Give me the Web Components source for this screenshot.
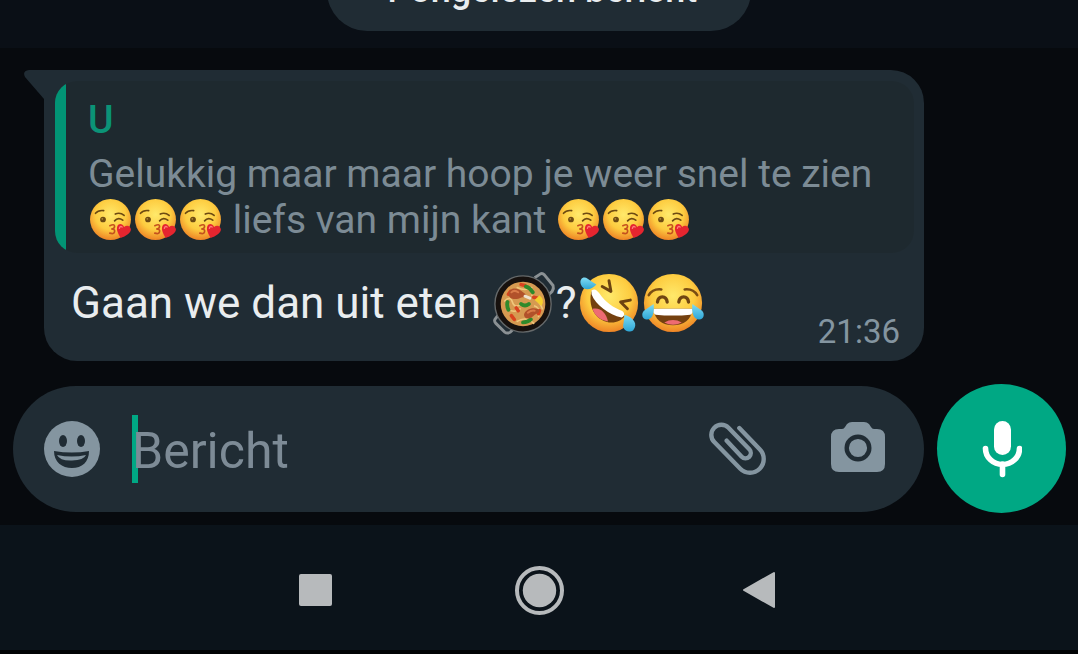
<!DOCTYPE html>
<html lang="nl">
<head>
<meta charset="utf-8">
<meta name="viewport" content="width=device-width, initial-scale=1">
<title>Chat</title>
<style>
  html {
    --bubble: #202c34;
    --muted: #8495a0;
    --accent: #00a884;
    background: #000;
  }
  body {
    margin: 0;
    font-family: Roboto, "Liberation Sans", sans-serif;
    color: #e9edef;
  }
</style>
</head>
<body>
<chat-screen>
  <unread-divider slot="top">1 ongelezen bericht</unread-divider>
  <chat-bubble time="21:36">
    <quoted-message slot="quote" author="U">Gelukkig maar maar hoop je weer snel te zien <chat-emoji name="kiss"></chat-emoji><chat-emoji name="kiss"></chat-emoji><chat-emoji name="kiss"></chat-emoji> liefs van mijn kant <chat-emoji name="kiss"></chat-emoji><chat-emoji name="kiss"></chat-emoji><chat-emoji name="kiss"></chat-emoji></quoted-message>
    Gaan we dan uit eten <chat-emoji name="pan"></chat-emoji>?<chat-emoji name="rofl"></chat-emoji><chat-emoji name="joy"></chat-emoji>
  </chat-bubble>
  <chat-composer placeholder="Bericht"></chat-composer>
  <system-nav slot="bottom"></system-nav>
</chat-screen>

<script>
const FACE = `
  <defs>
    <radialGradient id="face" cx="50%" cy="38%" r="62%">
      <stop offset="0" stop-color="#ffe96b"/>
      <stop offset=".6" stop-color="#fdcc40"/>
      <stop offset="1" stop-color="#ee8426"/>
    </radialGradient>
    <linearGradient id="tear" x1="0" y1="0" x2="0" y2="1">
      <stop offset="0" stop-color="#7fdcf5"/>
      <stop offset="1" stop-color="#2ea6d6"/>
    </linearGradient>
  </defs>
  <circle cx="32" cy="32" r="30" fill="url(#face)"/>`;

const EMOJI = {
  kiss: {
    label: 'gezicht dat een kus geeft',
    body: `${FACE}
      <g fill="none" stroke="#6d4a12" stroke-width="2.4" stroke-linecap="round">
        <path d="M10 23Q14 18 22 19"/>
        <path d="M39 24Q46 21 52 26"/>
        <path d="M38 34Q43 28 50 33"/>
      </g>
      <circle cx="21" cy="32" r="4.2" fill="#6d4a12"/>
      <circle cx="20" cy="31" r="1.3" fill="#b08a3a"/>
      <path d="M31 41Q38 38 38 42Q38 46 33 46Q39 46 38 50Q37 54 31 52" fill="none" stroke="#c4511e" stroke-width="2.4" stroke-linecap="round"/>
      <path d="M47 59C44 54 40 48 42 42C44 37 50 38 52 43C56 39 62 42 62 47C61 53 53 57 47 59Z" fill="#e5252f"/>
      <path d="M45 45Q46 41 49 43" fill="none" stroke="#ff7b78" stroke-width="2" stroke-linecap="round"/>`
  },
  pan: {
    label: 'pan met eten',
    body: `
      <g fill="none" stroke="#8b9194" stroke-width="3" stroke-linejoin="round">
        <path d="M43 6L49 2Q51 1 53 3L62 14Q63 17 61 20L58 23"/>
        <path d="M5 45L2 49Q1 51 3 53L12 62Q15 64 18 62L21 59"/>
      </g>
      <circle cx="31" cy="33" r="29" fill="#17110e" stroke="#65696a" stroke-width="1.4"/>
      <circle cx="31" cy="33" r="23" fill="#d69a51"/>
      <g fill="none" stroke="#f0c77c" stroke-width="1.6" stroke-linecap="round">
        <path d="M12 30Q18 24 20 31T30 33M25 16Q33 20 40 16M40 24Q48 30 51 38M15 38Q22 43 28 38M25 51Q34 45 42 53M43 35Q49 37 47 46"/>
      </g>
      <g fill="none" stroke="#d9431f" stroke-width="3.6" stroke-linecap="round">
        <path d="M29 13L33 14M19 45L22 49M24 37L26 40M46 27L42 26M48 40L47 43M16 23L18 20"/>
      </g>
      <g fill="none" stroke="#2f8a2b" stroke-width="4" stroke-linecap="round">
        <path d="M34 15Q38 16 41 21M15 31Q14 35 16 39M29 33Q33 36 37 33M31 52Q36 52 39 49"/>
      </g>
      <path d="M43 29L48 24Q54 29 50 35Z" fill="#f5cf2e"/>
      <g fill="#b1512a">
        <path d="M16 23C17 15 26 16 31 21C36 24 35 27 30 26C24 29 17 29 16 23Z"/>
        <path d="M32 44C33 39 40 36 46 38C50 40 47 43 43 44C39 49 32 49 32 44Z"/>
      </g>
      <path d="M33 25L38 27" stroke="#eee2cf" stroke-width="3" stroke-linecap="round"/>
      <path d="M19 21Q22 18 26 21M36 42Q40 39 43 40" fill="none" stroke="#d97b48" stroke-width="2" stroke-linecap="round"/>`
  },
  rofl: {
    label: 'rollend van het lachen',
    body: `${FACE}
      <g fill="none" stroke="#6b4310" stroke-width="3" stroke-linecap="round" stroke-linejoin="round">
        <path d="M25 15L34 20L32 9"/>
        <path d="M54 29L44 31L51 38"/>
      </g>
      <path d="M14 20C10 34 17 50 32 52C39 53 45 50 48 46Z" fill="#74400f"/>
      <path d="M15 38C23 36 29 42 31 51C23 50 17 45 15 38Z" fill="#ee6b72"/>
      <path d="M14 19C17 17 19 18 22 22C29 32 37 37 45 40C49 42 48 46 45 47C32 44 18 34 14 23Z" fill="#fff"/>
      <path d="M19 13C13 20 5 19 3 13C1 7 6 4 10 7C13 9 16 11 19 13Z" fill="url(#tear)"/>
      <path d="M48 44C58 47 62 54 57 60C51 64 45 59 47 53Z" fill="url(#tear)"/>`
  },
  joy: {
    label: 'tranen van het lachen',
    body: `${FACE}
      <g fill="none" stroke="#7a4d13" stroke-width="2.6" stroke-linecap="round">
        <path d="M7 24Q11 17 20 18"/>
        <path d="M57 24Q53 17 44 18"/>
      </g>
      <g fill="none" stroke="#704512" stroke-width="3.4" stroke-linecap="round">
        <path d="M16 31C17 24 25 24 26 31"/>
        <path d="M38 31C39 24 47 24 48 31"/>
      </g>
      <path d="M12 38H52C51 50 43 55 32 55S13 50 12 38Z" fill="#74400f"/>
      <path d="M12 38H52Q53 43 50 44Q32 46 14 44Q11 43 12 38Z" fill="#fff"/>
      <path d="M23 52Q32 47 41 52Q32 57 23 52Z" fill="#ee6b72"/>
      <path d="M12 33C13 42 11 49 5 49C0 49-1 43 2 40Z" fill="url(#tear)"/>
      <path d="M52 33C51 42 53 49 59 49C64 49 65 43 62 40Z" fill="url(#tear)"/>`
  }
};

/**
 * @class ChatEmoji
 */
class ChatEmoji extends HTMLElement {
  constructor () {
    super();
    this.attachShadow({ mode: 'open' });
  }
  connectedCallback () {
    const emoji = EMOJI[this.getAttribute('name')];
    this.shadowRoot.innerHTML = `
      <style>
      :host {
        display: inline-block;
        width: var(--emoji-size, 45px);
        height: var(--emoji-size, 45px);
        vertical-align: top;
      }
      svg {
        display: block;
        width: 100%;
        height: 100%;
      }
      </style>
      <svg viewBox="-1 -1 66 66" role="img" aria-label="${emoji.label}">${emoji.body}</svg>`;
  }
}

/**
 * @class UnreadDivider
 */
class UnreadDivider extends HTMLElement {
  constructor () {
    super();
    this.attachShadow({ mode: 'open' }).innerHTML = `
      <style>
      :host {
        display: flex;
        flex: none;
        align-items: flex-end;
        justify-content: center;
        box-sizing: border-box;
        height: 48px;
        padding-bottom: 17px;
        overflow: hidden;
        background: #0a0f16;
      }
      .pill {
        flex: none;
        padding: 20px 54px;
        border-radius: 40px;
        background: var(--bubble);
        font-size: 36px;
        font-weight: 500;
        line-height: 42px;
      }
      </style>
      <div class="pill"><slot></slot></div>`;
  }
}

/**
 * @class QuotedMessage
 */
class QuotedMessage extends HTMLElement {
  constructor () {
    super();
    this.attachShadow({ mode: 'open' });
  }
  connectedCallback () {
    this.shadowRoot.innerHTML = `
      <style>
      :host {
        --emoji-size: 45px;
        display: block;
        padding: 16px 22px 10px 33px;
        border-radius: 22px;
        background: linear-gradient(90deg, #029475 11px, #1e292f 11px);
        font-size: 39px;
        line-height: 46px;
        color: #7c8b95;
      }
      .wrap {
        display: flex;
        flex-direction: column;
        gap: 8px;
      }
      .author {
        color: #0b9377;
        font-weight: 500;
      }
      </style>
      <div class="wrap">
        <div class="author">${this.getAttribute('author')}</div>
        <div><slot></slot></div>
      </div>`;
  }
}

/**
 * @class ChatBubble
 */
class ChatBubble extends HTMLElement {
  constructor () {
    super();
    this.attachShadow({ mode: 'open' });
  }
  connectedCallback () {
    const time = this.getAttribute('time');
    this.shadowRoot.innerHTML = `
      <style>
      :host {
        display: block;
        position: relative;
        margin: 0 154px 0 44px;
        padding: 11px 10px 9px 11px;
        border-radius: 0 33px 33px 33px;
        background: var(--bubble);
      }
      .tail {
        position: absolute;
        top: 0;
        left: -20px;
        width: 21px;
        height: 30px;
        fill: var(--bubble);
      }
      .row {
        display: flex;
        justify-content: space-between;
        align-items: flex-end;
        padding: 18px 14px 0 16px;
      }
      .text {
        --emoji-size: 64px;
        margin-bottom: 17px;
        font-size: 44px;
        line-height: 64px;
      }
      time {
        font-size: 33px;
        line-height: 40px;
        color: var(--muted);
      }
      </style>
      <svg class="tail" viewBox="0 0 21 30" aria-hidden="true"><path d="M21 0H5Q-2 1 1 7L20 29H21Z"/></svg>
      <slot name="quote"></slot>
      <div class="row">
        <div class="text"><slot></slot></div>
        <time datetime="${time}">${time}</time>
      </div>`;
  }
}

/**
 * @class ChatComposer
 */
class ChatComposer extends HTMLElement {
  constructor () {
    super();
    this.attachShadow({ mode: 'open' });
  }
  connectedCallback () {
    const placeholder = this.getAttribute('placeholder');
    this.shadowRoot.innerHTML = `
      <style>
      :host {
        display: flex;
        align-items: center;
        gap: 13px;
        padding: 0 12px 0 13px;
      }
      .field {
        display: flex;
        flex: 1;
        min-width: 0;
        align-items: center;
        box-sizing: border-box;
        height: 126px;
        padding: 0 38px 0 31px;
        border-radius: 63px;
        background: var(--bubble);
      }
      button {
        flex: none;
        display: flex;
        align-items: center;
        justify-content: center;
        padding: 0;
        border: none;
        background: none;
        color: var(--muted);
        cursor: pointer;
      }
      svg {
        display: block;
      }
      input {
        flex: 1;
        min-width: 0;
        box-sizing: border-box;
        height: 68px;
        margin: 0 32px;
        padding: 4px 0 0;
        border: none;
        outline: none;
        /* the caret bar sits under the placeholder */
        background: linear-gradient(var(--accent), var(--accent)) no-repeat left / 6px 100%;
        font: 50px/64px Roboto, "Liberation Sans", sans-serif;
        color: inherit;
        caret-color: var(--accent);
      }
      input::placeholder {
        color: #7d8b96;
        opacity: 1;
      }
      .camera {
        margin-left: 64px;
      }
      .mic {
        width: 129px;
        height: 129px;
        border-radius: 50%;
        background: var(--accent);
        color: #fff;
      }
      </style>
      <div class="field">
        <button type="button" aria-label="Emoji">
          <svg width="56" height="56" viewBox="0 0 56 56">
            <circle cx="28" cy="28" r="28" fill="currentColor"/>
            <g fill="#202c34">
              <ellipse cx="19" cy="20" rx="4" ry="6"/>
              <ellipse cx="37" cy="20" rx="4" ry="6"/>
              <path d="M10 30Q28 33 45 30C45 41 38 47 28 47S10 41 10 30Z"/>
            </g>
            <path d="M13 34Q28 37 42 34Q40 39 28 39.5T13 34Z" fill="currentColor"/>
          </svg>
        </button>
        <input type="text" placeholder="${placeholder}" aria-label="${placeholder}">
        <button type="button" aria-label="Bijlage">
          <svg width="58" height="54" viewBox="0 0 58 54" fill="none" stroke="currentColor" stroke-width="4.4" stroke-linecap="round" stroke-linejoin="round">
            <path d="M31.3 6L51.7 27.3A13.7 13.7 0 0 1 32.3 46.7L6.3 20A10 10 0 0 1 20.5 5.7L41.3 27.3A5.3 5.3 0 0 1 33.7 34.7L18.7 18.7"/>
          </svg>
        </button>
        <button type="button" class="camera" aria-label="Camera">
          <svg width="56" height="56" viewBox="0 0 56 56">
            <path d="M9 8H12Q14 8 15 6L17 3Q19 1 22 1H34Q37 1 39 3L41 6Q42 8 44 8H47Q55 8 55 16V43Q55 51 47 51H9Q1 51 1 43V16Q1 8 9 8Z" fill="currentColor"/>
            <circle cx="28" cy="27" r="11.3" fill="none" stroke="#202c34" stroke-width="4.4"/>
          </svg>
        </button>
      </div>
      <button type="button" class="mic" aria-label="Spraakbericht">
        <svg width="40" height="58" viewBox="0 0 40 58">
          <rect x="12" y="1" width="17" height="34" rx="8.5" fill="currentColor"/>
          <path d="M3.5 28.5A17 16 0 0 0 37.5 28.5M20.5 44V54.5" fill="none" stroke="currentColor" stroke-width="5.6" stroke-linecap="round"/>
        </svg>
      </button>`;
  }
}

/**
 * @class SystemNav
 */
class SystemNav extends HTMLElement {
  constructor () {
    super();
    this.attachShadow({ mode: 'open' }).innerHTML = `
      <style>
      :host {
        display: block;
        border-bottom: 4px solid #010304;
        background: #0b131a;
      }
      nav {
        display: grid;
        grid-template-columns: repeat(3, minmax(0, 224px));
        justify-content: center;
        height: 120px;
        padding-top: 5px;
      }
      button {
        display: flex;
        align-items: center;
        justify-content: center;
        padding: 0;
        border: none;
        background: none;
        color: #b7babc;
        cursor: pointer;
      }
      </style>
      <nav aria-label="Systeem">
        <button type="button" aria-label="Recente apps">
          <svg width="50" height="50" viewBox="0 0 50 50"><rect x="9" y="9" width="33" height="32" rx="2" fill="currentColor"/></svg>
        </button>
        <button type="button" aria-label="Start">
          <svg width="50" height="50" viewBox="0 0 50 50">
            <circle cx="25.5" cy="25.5" r="22.5" fill="none" stroke="currentColor" stroke-width="4"/>
            <circle cx="25.5" cy="25.5" r="16.7" fill="currentColor"/>
          </svg>
        </button>
        <button type="button" aria-label="Terug">
          <svg width="50" height="50" viewBox="0 0 50 50"><path d="M6 25L36 8V42Z" fill="currentColor" stroke="currentColor" stroke-width="2" stroke-linejoin="round"/></svg>
        </button>
      </nav>`;
  }
}

/**
 * @class ChatScreen
 */
class ChatScreen extends HTMLElement {
  constructor () {
    super();
    this.attachShadow({ mode: 'open' }).innerHTML = `
      <style>
      :host {
        display: flex;
        flex-direction: column;
        min-height: 100vh;
      }
      main {
        display: flex;
        flex: 1;
        flex-direction: column;
        justify-content: flex-end;
        gap: 23px;
        padding: 22px 0 12px;
        background: #070a0e;
      }
      </style>
      <slot name="top"></slot>
      <main><slot></slot></main>
      <slot name="bottom"></slot>`;
  }
}

// Register
customElements.define('chat-emoji', ChatEmoji);
customElements.define('unread-divider', UnreadDivider);
customElements.define('quoted-message', QuotedMessage);
customElements.define('chat-bubble', ChatBubble);
customElements.define('chat-composer', ChatComposer);
customElements.define('system-nav', SystemNav);
customElements.define('chat-screen', ChatScreen);
</script>
</body>
</html>
